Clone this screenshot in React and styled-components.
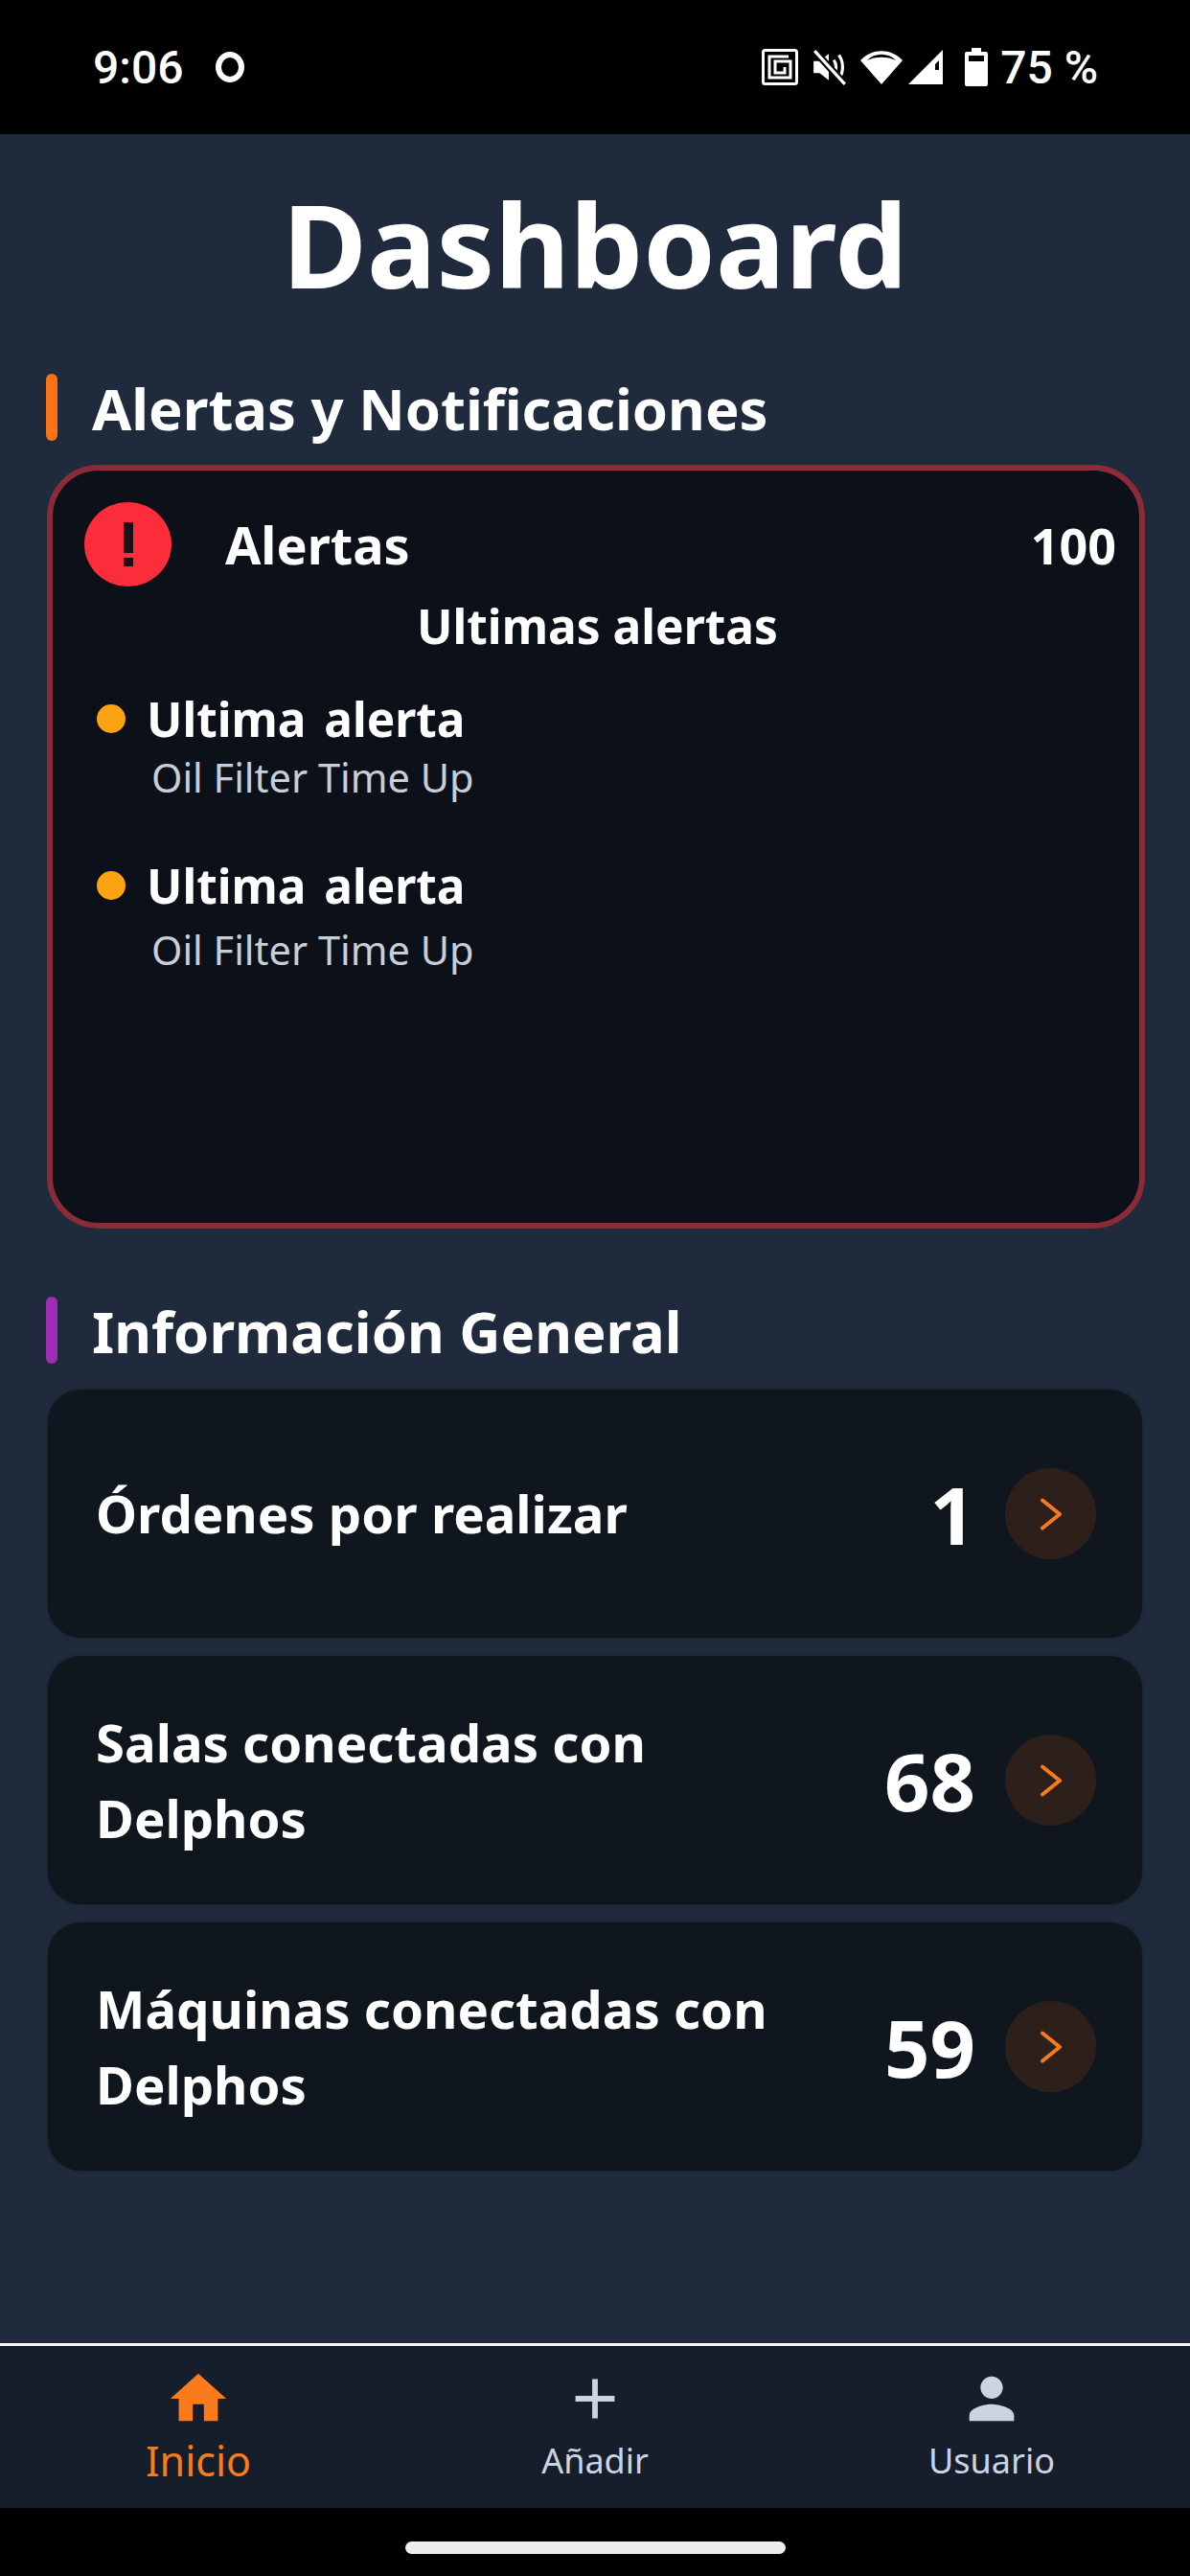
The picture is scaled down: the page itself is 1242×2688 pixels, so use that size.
import styled, { createGlobalStyle } from "styled-components";
import { MdHome, MdAdd, MdPerson } from "react-icons/md";

const GlobalStyle = createGlobalStyle`
  html, body {
    margin: 0;
    padding: 0;
    background: #000;
  }
  * {
    box-sizing: border-box;
  }
`;

const Screen = styled.div`
  width: 1242px;
  height: 2688px;
  display: flex;
  flex-direction: column;
  background: #1f2a3c;
  font-family: "Noto Sans", "Open Sans", sans-serif;
  color: #fff;
  overflow: hidden;
`;

const StatusBar = styled.div`
  height: 140px;
  flex-shrink: 0;
  background: #000;
  display: flex;
  align-items: center;
  justify-content: space-between;
  padding: 0 96px 0 97px;
  font-family: Roboto, sans-serif;
  font-size: 48px;
  font-weight: 500;
`;

const StatusLeft = styled.div`
  display: flex;
  align-items: center;
  gap: 33px;
`;

const StatusRing = styled.span`
  width: 30px;
  height: 32px;
  border: 6px solid #fff;
  border-radius: 50%;
`;

const StatusRight = styled.div`
  display: flex;
  align-items: center;
`;

const StatusIcon = styled.span`
  display: flex;
  margin-left: ${(props) => props.$gap}px;
`;

const Main = styled.main`
  flex: 1;
  padding: 0 48px;
  display: flex;
  flex-direction: column;
`;

const Title = styled.h1`
  margin: 0;
  padding-top: 26px;
  height: 250px;
  text-align: center;
  font-size: 121px;
  font-weight: 700;
  line-height: 176px;
`;

const SectionHead = styled.div`
  display: flex;
  align-items: center;
  gap: 36px;
  height: 70px;
`;

const SectionBar = styled.span`
  width: 12px;
  height: 70px;
  border-radius: 6px;
  background: ${(props) => props.color};
`;

const SectionTitle = styled.h2`
  margin: 0;
  font-size: 59.7px;
  font-weight: 700;
`;

const AlertCard = styled.section`
  margin: 25px 0 0 1px;
  width: 1146px;
  height: 797px;
  border: 6px solid #8a2b37;
  border-radius: 54px;
  background: #0c1018;
  padding: 33px 24px 0 33px;
`;

const AlertHead = styled.div`
  display: flex;
  align-items: center;
  height: 88px;
`;

const AlertBadge = styled.span`
  width: 91px;
  height: 88px;
  border-radius: 50%;
  background: #fc2d3a;
  display: flex;
  align-items: center;
  justify-content: center;
`;

const AlertLabel = styled.span`
  margin-left: 56px;
  font-size: 54px;
  font-weight: 700;
  flex: 1;
`;

const AlertCount = styled.span`
  font-size: 52px;
  font-weight: 700;
`;

const AlertSubtitle = styled.div`
  margin-top: 6px;
  padding-right: 6px;
  text-align: center;
  font-size: 49.6px;
  font-weight: 700;
  line-height: 70px;
`;

const AlertList = styled.div`
  margin-top: 30px;
  display: flex;
  flex-direction: column;
  gap: 52px;
`;

const AlertItem = styled.div`
  padding-left: 13px;
`;

const AlertItemHead = styled.div`
  display: flex;
  align-items: center;
  gap: 22px;
  font-size: 49.5px;
  font-weight: 700;
  word-spacing: 6px;
  line-height: 64px;
`;

const Dot = styled.span`
  width: 30px;
  height: 30px;
  border-radius: 50%;
  background: #fca311;
`;

const AlertItemText = styled.div`
  margin: ${(props) => props.$top}px 0 0 57px;
  font-size: 41.5px;
  font-weight: 400;
  color: #c6ceda;
  line-height: 58px;
`;

const InfoHead = styled(SectionHead)`
  margin-top: 71px;
`;

const InfoList = styled.div`
  margin: 27px 0 0 2px;
  display: flex;
  flex-direction: column;
  gap: 19px;
`;

const InfoCard = styled.div`
  width: 1142px;
  height: 259px;
  border-radius: 34px;
  background: #0f161e;
  box-shadow: 0 0 4px rgba(0, 0, 0, 0.25);
  display: flex;
  align-items: center;
  padding: 0 48px 0 50px;
`;

const InfoLabel = styled.div`
  flex: 1;
  font-size: 54.5px;
  font-weight: 700;
  line-height: 79px;
  max-width: 770px;
`;

const InfoValue = styled.div`
  margin-left: auto;
  font-size: 83px;
  font-weight: 700;
`;

const Arrow = styled.span`
  margin-left: 31px;
  width: 95px;
  height: 95px;
  border-radius: 50%;
  background: #2d201b;
  color: #f47b20;
  display: flex;
  align-items: center;
  justify-content: center;
`;

const Nav = styled.nav`
  height: 172px;
  flex-shrink: 0;
  border-top: 3px solid #f2f4f6;
  background: #171e2b;
  display: grid;
  grid-template-columns: repeat(3, 1fr);
`;

const NavItem = styled.div`
  display: flex;
  flex-direction: column;
  align-items: center;
  padding-top: 20px;
  color: ${(props) => (props.$active ? "#f97b1c" : "#cbd5e1")};
`;

const NavLabel = styled.span`
  font-size: ${(props) => (props.$active ? "43px" : "36px")};
  line-height: 60px;
  font-weight: 400;
`;

const BottomBar = styled.div`
  height: 71px;
  flex-shrink: 0;
  background: #000;
  display: flex;
  justify-content: center;
  padding-top: 35px;
`;

const HomePill = styled.span`
  width: 397px;
  height: 13px;
  border-radius: 7px;
  background: #eee;
`;

const NfcIcon = () => (
  <svg width="38" height="38" viewBox="0 0 38 38" fill="none" stroke="#fff" strokeWidth="3">
    <rect x="1.500" y="1.500" width="35" height="35" rx="2" />
    <path d="M28 8H8v22h22V13H14v12h10v-6" />
  </svg>
);

const MuteIcon = () => (
  <svg width="36" height="40" viewBox="0 0 34 38" fill="none" stroke="#fff" strokeWidth="3">
    <path d="M1 13h6l9 -7v26l-9 -7H1z" fill="#fff" stroke="none" />
    <path d="M21 12c3 4 3 10 0 14M26 7c5 7 5 17 0 24" />
    <path d="M2 3l30 33" stroke="#000" strokeWidth="7" />
    <path d="M2 3l30 33" />
  </svg>
);

const WifiIcon = () => (
  <svg width="46" height="38" viewBox="0 0 46 38" fill="none">
    <path d="M23 37L1 12C13 -1 33 -1 45 12Z" fill="#fff" />
    <path d="M8 12C16 3.500 30 3.500 38 12C30 7.500 16 7.500 8 12Z" fill="#000" />
  </svg>
);

const SignalIcon = () => (
  <svg width="38" height="38" viewBox="0 0 38 38">
    <path d="M37 1V37H1Z" fill="#fff" />
    <path d="M33 12V22H29V16Z" fill="#000" />
  </svg>
);

const BatteryIcon = () => (
  <svg width="24" height="40" viewBox="0 0 24 40">
    <path d="M7 0h10v4h5a2 2 0 0 1 2 2v32a2 2 0 0 1-2 2H2a2 2 0 0 1-2-2V6a2 2 0 0 1 2-2h5z" fill="#fff" />
    <rect x="4" y="8" width="16" height="6" fill="#000" />
  </svg>
);

const BangIcon = () => (
  <svg width="12" height="46" viewBox="0 0 12 46" fill="#1a1216">
    <rect x="1" y="0" width="10" height="32" />
    <rect x="1" y="37" width="10" height="9" />
  </svg>
);

const ChevronIcon = () => (
  <svg width="24" height="34" viewBox="0 0 24 34" fill="none" stroke="currentColor" strokeWidth="4" strokeLinecap="round" strokeLinejoin="round">
    <path d="M3 2.500L21 17L3 31.500" />
  </svg>
);

const infoRows = [
  { label: "Órdenes por realizar", value: 1 },
  { label: "Salas conectadas con Delphos", value: 68 },
  { label: "Máquinas conectadas con Delphos", value: 59 },
];

const alertRows = [
  { id: 1, textTop: 0 },
  { id: 2, textTop: 6 },
];

const App = () => {
  return (
    <Screen>
      <GlobalStyle />
      <StatusBar>
        <StatusLeft>
          <span>9:06</span>
          <StatusRing />
        </StatusLeft>
        <StatusRight>
          <StatusIcon $gap={0}>
            <NfcIcon />
          </StatusIcon>
          <StatusIcon $gap={15}>
            <MuteIcon />
          </StatusIcon>
          <StatusIcon $gap={13}>
            <WifiIcon />
          </StatusIcon>
          <StatusIcon $gap={4}>
            <SignalIcon />
          </StatusIcon>
          <StatusIcon $gap={22}>
            <BatteryIcon />
          </StatusIcon>
          <StatusIcon $gap={13}>75 %</StatusIcon>
        </StatusRight>
      </StatusBar>

      <Main>
        <Title>Dashboard</Title>

        <SectionHead>
          <SectionBar color="#f97316" />
          <SectionTitle>Alertas y Notificaciones</SectionTitle>
        </SectionHead>

        <AlertCard>
          <AlertHead>
            <AlertBadge>
              <BangIcon />
            </AlertBadge>
            <AlertLabel>Alertas</AlertLabel>
            <AlertCount>100</AlertCount>
          </AlertHead>
          <AlertSubtitle>Ultimas alertas</AlertSubtitle>
          <AlertList>
            {alertRows.map((row) => (
              <AlertItem key={row.id}>
                <AlertItemHead>
                  <Dot />
                  Ultima alerta
                </AlertItemHead>
                <AlertItemText $top={row.textTop}>Oil Filter Time Up</AlertItemText>
              </AlertItem>
            ))}
          </AlertList>
        </AlertCard>

        <InfoHead>
          <SectionBar color="#a02bb5" />
          <SectionTitle>Información General</SectionTitle>
        </InfoHead>

        <InfoList>
          {infoRows.map((row) => (
            <InfoCard key={row.label}>
              <InfoLabel>{row.label}</InfoLabel>
              <InfoValue>{row.value}</InfoValue>
              <Arrow>
                <ChevronIcon />
              </Arrow>
            </InfoCard>
          ))}
        </InfoList>
      </Main>

      <Nav>
        <NavItem $active>
          <MdHome size={70} />
          <NavLabel $active>Inicio</NavLabel>
        </NavItem>
        <NavItem>
          <MdAdd size={70} />
          <NavLabel>Añadir</NavLabel>
        </NavItem>
        <NavItem>
          <MdPerson size={70} />
          <NavLabel>Usuario</NavLabel>
        </NavItem>
      </Nav>

      <BottomBar>
        <HomePill />
      </BottomBar>
    </Screen>
  );
};

export default App;
